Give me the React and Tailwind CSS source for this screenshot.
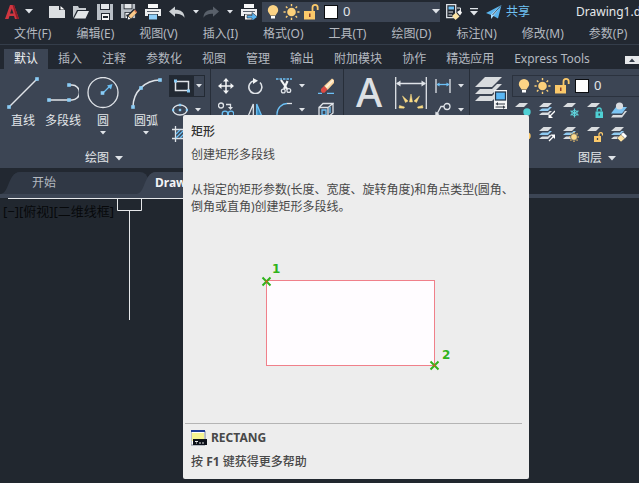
const MENUS = ['文件(F)', '编辑(E)', '视图(V)', '插入(I)', '格式(O)', '工具(T)', '绘图(D)', '标注(N)', '修改(M)', '参数(P)'];

const RIBBON_TABS = ['默认', '插入', '注释', '参数化', '视图', '管理', '输出', '附加模块', '协作', '精选应用', 'Express Tools'];

const BLUE = '#6cc0f5';
const PALE = '#dfe3e8';
const GOLD = '#fbc96a';

function Icon({ size = 16, children }) {
  return (
    <svg
      className="shrink-0"
      width={size}
      height={size}
      viewBox={`0 0 ${size} ${size}`}
      fill="none"
      stroke={PALE}
      strokeWidth="1.3"
      aria-hidden="true"
    >
      {children}
    </svg>
  );
}

function Caret({ big }) {
  return big ? (
    <svg className="shrink-0" width="8" height="5" viewBox="0 0 8 5" fill={PALE} aria-hidden="true"><path d="M0 0h8L4 4.500z" /></svg>
  ) : (
    <svg className="shrink-0" width="6" height="4" viewBox="0 0 6 4" fill={PALE} aria-hidden="true"><path d="M0 0h6L3 3.600z" /></svg>
  );
}

// grip points on the drawing tools
function Grips({ at, r = 1.8 }) {
  return at.map(([x, y]) => (
    <rect key={`${x}-${y}`} x={x - r} y={y - r} width={r * 2} height={r * 2} fill="#8accf6" stroke="none" />
  ));
}

function IconButton({ label, children }) {
  return <button type="button" aria-label={label} className="flex shrink-0 items-center">{children}</button>;
}

function WithCaret({ label, gap = 'gap-[7px]', children }) {
  return (
    <button type="button" aria-label={label} className={`flex shrink-0 items-center ${gap}`}>
      {children}
      <Caret />
    </button>
  );
}

/* ---------- quick access icons ---------- */

const Disk = () => (
  <g stroke="none">
    <path d="M0 0h16v16H0z" fill="#b9bfc6" />
    <path d="M3 0h10v6H3zM4 9h9v7H4z" fill="#222831" />
    <path d="M4 0h8v5H4z" fill="#e3e6e9" />
    <path d="M5 10h7v6H5z" fill="#f4f5f6" />
    <path d="M6 12h5v2H6z" fill="#222831" />
  </g>
);

const Printer = ({ paper }) => (
  <g stroke="none">
    <path d="M3 0h10v4H3z" fill="#f7f8f9" />
    <path d="M0 5h16v7H0z" fill="#eceef0" />
    <path d="M2 7h12v1H2z" fill="#59616d" />
    <path d="M3 10h10v6H3z" fill="#222831" />
    <path d="M4 10.500h8v5H4z" fill={paper} />
  </g>
);

/* ---------- layer state selector ---------- */

function LayerSelect({ className, caret }) {
  return (
    <div className={`flex items-center bg-[#3c4554] pl-[5px] ${className}`}>
      <svg className="mr-[5px] shrink-0" width="71" height="18" viewBox="0 0 71 18" aria-hidden="true">
        <path d="M6 2a5.200 5.200 0 0 0-5.200 5.200c0 2.300 2 3.500 2.700 5.300h5c.7-1.800 2.700-3 2.700-5.300A5.200 5.200 0 0 0 6 2z" fill="#fcd385" />
        <path d="M4 13h4v2.500H4z" fill="#fff" />
        <circle cx="24.500" cy="9" r="4.300" fill="#fcd07a" />
        <path d="M24.500 1v2.200M24.500 14.800V17M16.500 9h2.200M30.300 9h2.200M18.900 3.400l1.500 1.500M28.600 13.100l1.500 1.500M18.900 14.600l1.500-1.500M28.600 4.900l1.500-1.500" stroke="#fcd07a" strokeWidth="1.400" />
        <path d="M37 8h11v8.500H37z" fill={GOLD} />
        <path d="M45.500 8V4.500a2.600 2.600 0 0 1 5.200 0V7" stroke={GOLD} strokeWidth="1.800" fill="none" />
        <path d="M42 10.500h1.500v3.500H42z" fill="#8a3b2a" />
        <rect x="57.500" y="2.500" width="13" height="13" fill="#fff" stroke="#0b0d10" />
      </svg>
      <select aria-label="图层" className="h-full min-w-0 flex-1 appearance-none bg-transparent text-[13px] text-[#e4e7ea] outline-none">
        <option>0</option>
      </select>
      {caret && <Caret big />}
    </div>
  );
}

function TitleBar() {
  return (
    <header className="flex h-[23px] items-center overflow-hidden pl-1">
      <button type="button" aria-label="A" className="flex shrink-0 items-center gap-[5px]">
        <Icon>
          <path d="M1 15 6 1h4l5 14h-4l-1-3H5.500l-1 3z" fill="#cf3640" stroke="none" />
          <path d="m7.800 4.500 1.700 5H6z" fill="#222831" stroke="none" />
          <path d="m8.500 1H10l5 14h-2.200z" fill="#8f1d27" stroke="none" />
        </Icon>
        <Caret big />
      </button>
      <div className="ml-4 flex shrink-0 items-center gap-2">
        <IconButton label="新建">
          <Icon><path d="M0 2h10v4h6v8H0z" fill="#dcdfe2" stroke="none" /><path d="m11.500 2 4 3.500h-4z" fill="#fff" stroke="none" /></Icon>
        </IconButton>
        <IconButton label="打开">
          <Icon><path d="M0 14V2h5l1 2h7v2H4z" fill="#c6cbd0" stroke="none" /><path d="M5 7h11l-3.500 7.500H1z" fill="#e3e6e8" stroke="none" /></Icon>
        </IconButton>
        <IconButton label="保存"><Icon><Disk /></Icon></IconButton>
        <IconButton label="另存为">
          <Icon>
            <g transform="scale(.88)"><Disk /></g>
            <path d="M6 16v-4.500l7-7 3.500 3.500-7 7.500z" fill="#222831" stroke="none" />
            <path d="m7.500 12 6-6 2.500 2.500-6 6z" fill="#fbc988" stroke="none" />
            <path d="M7.300 12.500 9.500 15l-2.800.6z" fill="#fff" stroke="none" />
            <path d="m13 6.500 1-1 2 2.500-1 1z" fill="#c86a4a" stroke="none" />
          </Icon>
        </IconButton>
        <IconButton label="打印"><Icon><Printer paper="#8ecdf7" /></Icon></IconButton>
        <div className="flex gap-1">
          <WithCaret label="放弃" gap="gap-2">
            <Icon><path d="M0 7.500 6 2.500v3.200c6 0 9.500 2.500 9.500 8-2-3-4.500-4-9.500-4v3z" fill="#cdd1d5" stroke="none" /></Icon>
          </WithCaret>
          <WithCaret label="重做" gap="gap-2">
            <Icon><path d="m16 7.500-6-5v3.200c-6 0-9.500 2.500-9.500 8 2-3 4.500-4 9.500-4v3z" fill="#59606a" stroke="none" /></Icon>
          </WithCaret>
        </div>
        <IconButton label="输出">
          <Icon><Printer paper="#f4f5f6" /><path d="M6 11.500h5V8.500l5.500 4.500-5.500 4v-3H6z" fill="#59b3f0" stroke="#222831" strokeWidth=".6" /></Icon>
        </IconButton>
      </div>
      <LayerSelect caret className="ml-[5px] h-5 w-[178px] shrink-0" />
      <button type="button" aria-label="特性匹配" className="ml-1.5 flex shrink-0 items-center gap-2">
        <Icon>
          <path d="M.7.700h9v13h-9z" fill="#222831" stroke="#dfe3e8" />
          <path d="M2.500 2.500H8v3H2.500z" fill={BLUE} stroke="none" />
          <path d="M2.500 8H7M2.500 11H6M11 4h3.500v3" strokeWidth="1" />
          <path d="m6 12 4-3.500 3.500 4-4 3.500z" fill="#fbe3a4" stroke="none" />
          <path d="m11 8 3-2 2 2.500-2 3z" fill="#f7f7f7" stroke="none" />
        </Icon>
        <svg width="8" height="8" viewBox="0 0 8 8" fill={PALE} aria-hidden="true"><path d="M0 0h8v1.200H0zM0 3h8L4 7.500z" /></svg>
      </button>
      <button type="button" className="ml-2 flex shrink-0 items-center gap-1 text-xs text-[#70c2f3]">
        <Icon>
          <path d="M0 9 15.500 1 12 14.500 7.500 12z" fill="#5ab4ee" stroke="none" />
          <path d="M15.500 1 5 10.500V15l2.500-3z" fill="#a9dafa" stroke="none" />
          <path d="m15.500 1-9 10" stroke="#222831" strokeWidth=".7" />
        </Icon>
        共享
      </button>
      <h1 className="ml-[46px] whitespace-nowrap text-xs text-[#e6e9ec]">Drawing1.dwg</h1>
    </header>
  );
}

function MenuBar() {
  return (
    <nav className="flex h-[22px] items-center gap-[25px] overflow-hidden border-b border-[#343d4a] pl-[14px]">
      {MENUS.map((m) => (
        <button key={m} type="button" className="shrink-0 whitespace-nowrap text-xs text-[#b4b9c0]">{m}</button>
      ))}
    </nav>
  );
}

function RibbonTabs() {
  return (
    <div className="flex h-6 items-end overflow-hidden pl-1">
      <div role="tablist" className="flex">
        {RIBBON_TABS.map((t, i) => (
          <button
            key={t}
            type="button"
            role="tab"
            aria-selected={i === 0}
            className={`h-5 shrink-0 whitespace-nowrap px-[10px] text-xs ${i === 0 ? 'bg-[#3c4554] text-[#f0f2f4]' : 'text-[#b4b9c0]'}`}
          >
            {t}
          </button>
        ))}
      </div>
      <button type="button" aria-label="最小化" className="mb-[5px] ml-auto flex h-2 w-[14px] shrink-0 items-center justify-center bg-[#e6e8ea]">
        <svg width="6" height="4" viewBox="0 0 6 4" fill="#333b47" aria-hidden="true"><path d="M0 4h6L3 .4z" /></svg>
      </button>
    </div>
  );
}

function BigTool({ label, caret, children }) {
  return (
    <button type="button" className="flex w-10 shrink-0 flex-col items-center text-xs text-[#e2e5e9]">
      <Icon size={32}>{children}</Icon>
      <span className="mt-0.5 h-5 whitespace-nowrap leading-5">{label}</span>
      {caret && <Caret />}
    </button>
  );
}

function Row({ className = '', children }) {
  return <div className={`flex h-6 items-center ${className}`}>{children}</div>;
}

function DrawPanel() {
  return (
    <section className="flex shrink-0 flex-col border-r border-[#272e39] pl-[3px] pr-[5px]">
      <div className="flex h-[79px]">
        <div className="flex pt-2">
          <BigTool label="直线"><path d="M2 30 30 2" strokeWidth="1.500" /><Grips at={[[2, 30], [30, 2]]} /></BigTool>
          <BigTool label="多段线">
            <path d="M2 23h20M22 8h3a7.500 7.500 0 0 1 0 15h-3" strokeWidth="1.500" />
            <Grips at={[[2, 23], [22, 23], [22, 8]]} />
          </BigTool>
          <BigTool label="圆" caret>
            <circle cx="16" cy="15.500" r="15" />
            <path d="m16 16 7-7" stroke={BLUE} />
            <path d="m20 8.500 5.500-1.500L24 12.500z" fill={BLUE} stroke="none" />
            <Grips at={[[15.500, 16]]} />
          </BigTool>
          <div className="ml-[3px]">
            <BigTool label="圆弧" caret>
              <path d="M3 30C3 15 15 3 30 3" strokeWidth="1.500" />
              <Grips at={[[3, 30], [11, 11], [30, 3]]} />
            </BigTool>
          </div>
        </div>
        <div className="ml-[3px] pt-[5px]">
          <Row>
            <button type="button" aria-label="矩形" className="flex h-[22px] w-9 items-center border border-[#232a34] bg-[#3c4554]">
              <span className="flex h-full w-6 items-center justify-center bg-[#222933]">
                <Icon>
                  <path d="M1.500 3.500h13v9h-13z" strokeWidth="1.500" />
                  <Grips at={[[1.500, 3], [14.500, 13]]} r={1.500} />
                </Icon>
              </span>
              <span className="flex flex-1 justify-center"><Caret /></span>
            </button>
          </Row>
          <Row className="pl-[3px]">
            <WithCaret label="椭圆">
              <Icon>
                <ellipse cx="8" cy="8" rx="7" ry="5" />
                <Grips at={[[8, 8], [8, 3], [1, 8], [15, 8]]} r={1.200} />
              </Icon>
            </WithCaret>
          </Row>
          <Row className="pl-[3px]">
            <WithCaret label="图案填充">
              <Icon>
                <path d="M3.500 0v16M12.500 0v16M0 3.500h16M0 12.500h16" />
                <path d="m4 8 4-4M4 12l8-8M8 12l4-4" stroke={BLUE} />
              </Icon>
            </WithCaret>
          </Row>
        </div>
      </div>
      <PanelTitle className="justify-center">绘图</PanelTitle>
    </section>
  );
}

function PanelTitle({ className, children }) {
  return (
    <button type="button" className={`flex h-5 items-center gap-1.5 text-xs text-[#e2e5e9] ${className}`}>
      {children}
      <Caret big />
    </button>
  );
}

function ModifyPanel() {
  return (
    <section className="shrink-0 border-r border-[#272e39] pl-[7px] pr-[9px] pt-[5px]">
      <Row className="gap-[13px]">
        <IconButton label="移动">
          <Icon>
            <path d="M8 2v12M2 8h12" stroke="#f3f5f6" strokeWidth="1.500" />
            <path d="m8 0 3 3.500H5zM8 16l3-3.500H5zM0 8l3.500-3v6zM16 8l-3.500-3v6z" fill="#f3f5f6" stroke="none" />
          </Icon>
        </IconButton>
        <IconButton label="旋转">
          <Icon><path d="M13 4.500A6.500 6.500 0 1 1 7 2.700" strokeWidth="1.600" /><path d="M6 0v6l5-3.200z" fill="#f3f5f6" stroke="none" /></Icon>
        </IconButton>
        <WithCaret label="修剪">
          <Icon>
            <path d="M0 1h16" stroke={BLUE} strokeDasharray="2.500 1" />
            <path d="m5 2 6.500 9.500M11.500 3 8 11" stroke="#f3f5f6" strokeWidth="2.200" />
            <circle cx="7.300" cy="13" r="1.900" /><circle cx="12.800" cy="12.500" r="1.900" />
          </Icon>
        </WithCaret>
        <IconButton label="删除">
          <Icon>
            <path d="M0 15.500h4M9 15.500h7" stroke={BLUE} />
            <path d="m6 8 8-7.500 2 1.500v3l-6.500 7z" fill="#fbd39a" stroke="none" />
            <path d="m7.500 8.500 7-7 1 1.500-6.500 7z" fill="#fff0d8" stroke="none" />
            <path d="m3 11 3-3 3.500 3.500-3 3.200H4L3 13z" fill="#dd4b43" stroke="none" />
          </Icon>
        </IconButton>
      </Row>
      <Row className="gap-[13px]">
        <IconButton label="复制">
          <Icon>
            <circle cx="3" cy="3.500" r="2.500" /><circle cx="7" cy="12" r="2.800" stroke={BLUE} /><circle cx="13" cy="12" r="2.800" stroke={BLUE} />
            <path d="M8 2.500h4.500v3" /><path d="M10 5h5l-2.500 3z" fill={PALE} stroke="none" />
          </Icon>
        </IconButton>
        <IconButton label="镜像">
          <Icon><path d="M6.300 2v12.500H1z" /><path d="M9.700 2v12.500H15z" fill="#3586b8" stroke={BLUE} /></Icon>
        </IconButton>
        <WithCaret label="圆角">
          <Icon><path d="M1 16v-4C1 6 6 1.500 11 1.500" stroke={BLUE} /><path d="M11 1.500h5" /></Icon>
        </WithCaret>
        <IconButton label="分解">
          <Icon>
            <path d="M1 5.500h9V15H1zM1 5.500 5 1.500h10l-5 4M15 1.500V11l-5 4" />
            <path d="M4 8h4v5H4zM12 5v6" stroke={BLUE} />
          </Icon>
        </IconButton>
      </Row>
    </section>
  );
}

function AnnotatePanel() {
  return (
    <section className="flex shrink-0 border-r border-[#272e39] px-[5px]">
      <button type="button" className="mt-0.5 h-[42px] w-10 text-[40px] font-medium leading-[42px] text-[#dde0e4]">A</button>
      <div className="ml-0.5 mr-1 w-10 pt-2">
        <button type="button" aria-label="标注" className="flex w-full justify-center">
          <Icon size={32}>
            <path d="M.7 0v32M31.300 0v32M2 6.500h28" />
            <path d="m1 6.500 4.500-3v6zM31 6.500l-4.500-3v6z" fill={PALE} stroke="none" />
            <path d="m14.500 25 1.500-8 1.500 8zM10.500 25.500 7.500 19l5.500 5zM21.500 25.500l3-6.500-5.500 5zM9.500 30l-5-1.500L4 31l5 .2zM22.500 30l5-1.500.5 2.500-5 .2z" fill="#fbdc86" stroke="#fbdc86" strokeWidth=".5" />
          </Icon>
        </button>
      </div>
      <div className="pt-[5px]">
        <Row>
          <WithCaret label="线性">
            <Icon><path d="M1 1v14M15 1v14" /><path d="M2 6.500h12" stroke={BLUE} /><path d="m1.500 6.500 3-2v4zM14.500 6.500l-3-2v4z" fill={BLUE} stroke="none" /></Icon>
          </WithCaret>
        </Row>
        <Row>
          <WithCaret label="引线">
            <Icon><circle cx="12" cy="4.500" r="3" /><path d="M9 4.500H6L2 12" /><path d="M0 16 .5 9.500l4 2.500z" fill={PALE} stroke="none" /></Icon>
          </WithCaret>
        </Row>
      </div>
    </section>
  );
}

function Sheet({ y = 0, fill = '#d9dcdf' }) {
  return <path d={`M4.500 ${1 + y}H13l-4 4H0z`} fill={fill} stroke="none" />;
}

const Stack = () => (
  <>
    <Sheet y={8} /><Sheet y={5.500} fill="#3c4554" /><Sheet y={4} fill="#8fcaf0" /><Sheet y={1.500} fill="#3c4554" /><Sheet />
  </>
);

const LAYER_TOOLS = [
  ['关', <><Sheet /><circle cx="12" cy="10" r="3.700" fill="#4fd0d4" stroke="none" /></>],
  ['隔离', <><Stack /><path d="m16 9-5 5" stroke="#fff" /><path d="M9.500 16v-4.500L14 16z" fill="#fff" stroke="none" /></>],
  ['冻结', <><Sheet /><path d="M11.500 6.500v9M7.500 8.700l8 4.600M15.500 8.700l-8 4.600" stroke="#5fd4dc" strokeWidth="1.200" /><circle cx="11.500" cy="11" r="2.800" stroke="#5fd4dc" strokeWidth=".8" /></>],
  ['锁定', <><Sheet /><path d="M8.500 9.500H16V16H8.500z" fill="#4fd0d4" stroke="none" /><path d="M10.200 9.500V8a2 2 0 0 1 4 0v1.500" stroke="#4fd0d4" /><path d="M12.200 11.500v2" stroke="#26323d" /></>],
  ['置为当前', <><path d="M5 9h11l-5 6.500H0z" fill="#d9dcdf" stroke="none" /><path d="M5 6h11l-5 7H0z" fill="#3c4554" stroke="none" /><path d="M5 5h11l-5 6.500H0z" fill="#7cc4f2" stroke="none" /><circle cx="8.500" cy="4" r="3.600" fill="#d9dcdf" stroke="none" /></>],
  ['开', <><Sheet /><circle cx="12" cy="10" r="3.700" fill={GOLD} stroke="none" /><path d="M10.500 14h3v2h-3z" fill="#fff" stroke="none" /></>],
  ['取消隔离', <><Stack /><path d="m10 15 5-5" stroke="#fff" /><path d="M16 8.500V13l-4.500-4.500z" fill="#fff" stroke="none" /></>],
  ['解冻', <><Stack /><path d="M11 6v10M6 11h10M7.500 7.500l7 7M14.500 7.500l-7 7" stroke={GOLD} strokeWidth="1.200" /><circle cx="11" cy="11" r="3.400" fill="#fbd98c" stroke="#3c4554" strokeWidth=".7" /></>],
  ['解锁', <><Sheet /><path d="M7 10h7v6H7z" fill={GOLD} stroke="none" /><path d="M12 10V8a1.800 1.800 0 0 1 3.500 0v1.500" stroke={GOLD} /><path d="M10.500 12v2" stroke="#3c4554" /></>],
  ['匹配', <><Stack /><path d="m6 12 4-3.500 4 4L10 16z" fill="#fbe0a0" stroke="#3c4554" strokeWidth=".5" /><path d="m10 8 2.500-1.500L16 10l-2 2.500z" fill="#fff" stroke="none" /></>],
];

function LayerPanel() {
  return (
    <section className="flex min-w-0 flex-1 flex-col">
      <div className="flex h-[79px] pl-[5px]">
        <div className="pt-2">
          <IconButton label="图层特性">
            <Icon size={32}>
              <path d="M10 14h17L17 24H0z" fill="#d9dcdf" stroke="none" />
              <path d="M10 9h17L17 19H0z" fill="#3c4554" stroke="none" />
              <path d="M10 7h17L17 17H0z" fill="#d9dcdf" stroke="none" />
              <path d="M10 2h17L17 12H0z" fill="#3c4554" stroke="none" />
              <path d="M10 0h17L17 10H0z" fill="#d9dcdf" stroke="none" />
              <path d="M19 13h13v19H19z" fill="#f5f6f7" stroke="none" />
              <rect x="20.500" y="15" width="10" height="8" fill="#5ab7f4" stroke="#24364a" />
              <path d="M22 27h8M20.500 30h8" stroke="#333b47" strokeWidth="1" />
              <path d="m23 25-2.500 2 2.500 1.500zM28 28.500l2.500 1.500-2.500 2z" fill="#333b47" stroke="none" />
            </Icon>
          </IconButton>
        </div>
        <div className="ml-[5px] min-w-0 flex-1 pt-[5px]">
          <Row><LayerSelect className="h-[22px] w-full border border-r-0 border-[#2b323e]" /></Row>
          <Row className="gap-2 pl-[3px]">
            {LAYER_TOOLS.slice(0, 5).map(([label, art]) => <IconButton key={label} label={label}><Icon>{art}</Icon></IconButton>)}
          </Row>
          <Row className="gap-2 pl-[3px]">
            {LAYER_TOOLS.slice(5).map(([label, art]) => <IconButton key={label} label={label}><Icon>{art}</Icon></IconButton>)}
          </Row>
        </div>
      </div>
      <PanelTitle className="justify-end pr-[23px]">图层</PanelTitle>
    </section>
  );
}

function FileTabs() {
  return (
    <div className="flex h-[26px] items-stretch overflow-hidden border-b-4 border-[#3c4554] pl-3">
      <button type="button" className="relative h-[22px] w-[136px] rounded-t-lg bg-[#303845] pl-5 text-left text-xs text-[#b4b9c0]">
        <svg className="absolute -left-3 top-0" width="21" height="22" viewBox="0 0 21 22" fill="#303845" aria-hidden="true"><path d="M0 22c10 0 7-22 21-22v22z" /></svg>
        <span className="relative">开始</span>
      </button>
      <button type="button" className="relative h-[22px] w-[150px] rounded-t-lg bg-[#3c4554] pl-[7px] text-left text-xs font-bold text-[#f2f4f6]">
        <svg className="absolute -left-3 top-0" width="21" height="22" viewBox="0 0 21 22" fill="#3c4554" aria-hidden="true"><path d="M0 22c10 0 7-22 21-22v22z" /></svg>
        <span className="relative">Draw</span>
      </button>
    </div>
  );
}

function Canvas() {
  return (
    <main className="relative flex-1 overflow-hidden bg-[#21272f]">
      <svg className="absolute left-2 top-0" width="176" height="124" viewBox="0 0 176 124" fill="none" stroke="#e6e8ea" aria-hidden="true">
        <path d="M0 .5h176M109.500.5v12h24V.5M121.500 12.500V122" />
      </svg>
      <p className="relative pl-[3px] pt-1 text-[13px] leading-[19px] text-[#07090b]">[−][俯视][二维线框]</p>
    </main>
  );
}

function RectangleTooltip() {
  return (
    <aside role="tooltip" className="absolute left-[183px] top-[115px] w-[346px] rounded-xs bg-[#ededed] pb-[7px] text-xs text-[#484848]">
      <div className="px-2 pt-2">
        <h2 className="font-medium leading-[18px] text-[#303030]">矩形</h2>
        <p className="mt-1 leading-5">创建矩形多段线</p>
        <p className="mt-4 leading-[17px]">从指定的矩形参数(长度、宽度、旋转角度)和角点类型(圆角、倒角或直角)创建矩形多段线。</p>
      </div>
      <svg className="mx-auto mt-[43px] block" width="200" height="116" viewBox="0 0 200 116" aria-hidden="true">
        <rect x="10.500" y="22.500" width="168" height="85" fill="#fffcff" stroke="#f0808a" />
        <path d="m6.500 19.500 8 8m0-8-8 8M174.500 103.500l8 8m0-8-8 8" stroke="#2fb31a" strokeWidth="2" />
        <path d="M9.500 22.500h2v2h-2zM177.500 106.500h2v2h-2z" fill="#e05a20" />
        <g fill="#2fb31a" fontFamily="DejaVu Sans" fontWeight="700" fontSize="12">
          <text x="16" y="15">1</text>
          <text x="186" y="101">2</text>
        </g>
      </svg>
      <hr className="ml-0.5 mr-[7px] mt-[49px] border-[#b4b4b4]" />
      <div className="px-2 font-bold">
        <div className="flex h-7 items-center gap-1">
          <svg width="16" height="16" viewBox="0 0 16 16" aria-hidden="true">
            <path d="M0 1h14v14H0z" fill="#fff" stroke="#7c8596" />
            <path d="M1 3h12v8H1z" fill="#f6f392" />
            <path d="M0 0h14v2H0z" fill="#1d3a96" />
            <path d="M2 9h14v6H2z" fill="#0c1018" />
            <path d="M4 11.500h3M8 13h2M11 13h2M5 13h1" stroke="#e8e8e8" />
          </svg>
          RECTANG
        </div>
        <p className="font-medium leading-5">按 <b>F1</b> 键获得更多帮助</p>
      </div>
    </aside>
  );
}

export default function App() {
  return (
    <div className="relative flex min-h-screen flex-col overflow-hidden bg-[#222831] font-['Noto_Sans','Noto_Sans_CJK_SC',sans-serif]">
      <TitleBar />
      <MenuBar />
      <RibbonTabs />
      <div className="flex h-[99px] overflow-hidden bg-[#3c4554]">
        <DrawPanel />
        <ModifyPanel />
        <AnnotatePanel />
        <LayerPanel />
      </div>
      <div className="pt-1"><FileTabs /></div>
      <Canvas />
      <RectangleTooltip />
    </div>
  );
}
